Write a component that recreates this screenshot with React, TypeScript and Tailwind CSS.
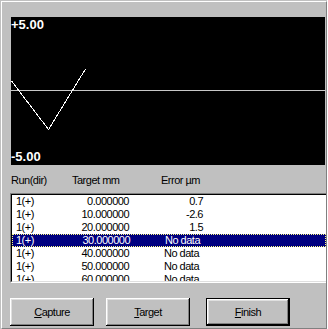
import React from 'react';

const rows = [
  { run: '1(+)', target: '0.000000', error: '0.7' },
  { run: '1(+)', target: '10.000000', error: '-2.6' },
  { run: '1(+)', target: '20.000000', error: '1.5' },
  { run: '1(+)', target: '30.000000', error: null },
  { run: '1(+)', target: '40.000000', error: null },
  { run: '1(+)', target: '50.000000', error: null },
  { run: '1(+)', target: '60.000000', error: null },
];

function WinButton({ label, hot, isDefault }: { label: string; hot: number; isDefault?: boolean }) {
  return (
    <button
      className={`w-[84px] h-[28px] bg-[#c0c0c0] text-black text-[11px] leading-[13px] tracking-[-0.5px] flex items-center justify-center shadow-[inset_-1px_-1px_0_#000,inset_1px_1px_0_#fff,inset_-2px_-2px_0_#808080,inset_2px_2px_0_#dfdfdf] ${
        isDefault ? 'border border-black' : ''
      }`}
    >
      <span>
        {label.slice(0, hot)}
        <u className="underline-offset-[1px]">{label[hot]}</u>
        {label.slice(hot + 1)}
      </span>
    </button>
  );
}

export default function App() {
  return (
    <div className="w-[328px] h-[329px] bg-[#c0c0c0] pl-px pt-px pb-px border-r border-white font-['Liberation_Sans',Arial,sans-serif] text-black select-none">
      <div className="h-[328px] border-t border-l border-white border-r border-r-[#808080] border-b border-b-[#808080] flex flex-col">
        {/* chart */}
        <div className="relative mt-[15px] ml-[9px] w-[314px] h-[148px] bg-black">
          <svg className="absolute inset-0" width="314" height="148" shapeRendering="crispEdges">
            <line x1="0" y1="73.5" x2="314" y2="73.5" stroke="#c8c8c8" strokeWidth="1" />
            <polyline points="0.5,64 37.5,112.5 74.5,52" fill="none" stroke="#fff" strokeWidth="1" />
          </svg>
          <span className="absolute left-0 top-[1px] text-white font-bold text-[13px] leading-[13px]">+5.00</span>
          <span className="absolute left-0 top-[133px] text-white font-bold text-[13px] leading-[13px]">-5.00</span>
        </div>

        {/* column headers */}
        <div className="mt-[9px] pl-[9px] h-[13px] flex text-[11px] leading-[13px] tracking-[-0.5px] whitespace-nowrap">
          <span className="w-[61px]">Run(dir)</span>
          <span className="w-[89px]">Target mm</span>
          <span>Error µm</span>
        </div>

        {/* list box */}
        <div className="mt-[6px] ml-[8px] w-[316px] h-[90px] border-t border-l border-t-[#808080] border-l-[#808080] border-b border-b-white">
          <div className="h-full border-t border-l border-black border-b border-b-[#dfdfdf] bg-white overflow-hidden">
            {rows.map((r, i) => {
              const sel = i === 3;
              return (
                <div
                  key={i}
                  className={`h-[13px] flex text-[11px] leading-[11px] tracking-[-0.5px] whitespace-nowrap ${
                    sel ? 'bg-[#000080] text-white border border-dotted border-[#ffff80]' : 'text-black py-px'
                  }`}
                >
                  <div className={`w-[117px] flex justify-between ${sel ? 'pl-[3px]' : 'pl-[4px]'}`}>
                    <span>{r.run}</span>
                    <span>{r.target}</span>
                  </div>
                  <div className={`ml-[35px] w-[39px] ${r.error ? 'text-right' : 'text-left'}`}>
                    {r.error ?? 'No data'}
                  </div>
                </div>
              );
            })}
          </div>
        </div>

        {/* buttons */}
        <div className="mt-[15px] ml-[8px] flex">
          <WinButton label="Capture" hot={0} />
          <div className="ml-[12px]">
            <WinButton label="Target" hot={0} />
          </div>
          <div className="ml-[16px]">
            <WinButton label="Finish" hot={0} isDefault />
          </div>
        </div>
      </div>
    </div>
  );
}
